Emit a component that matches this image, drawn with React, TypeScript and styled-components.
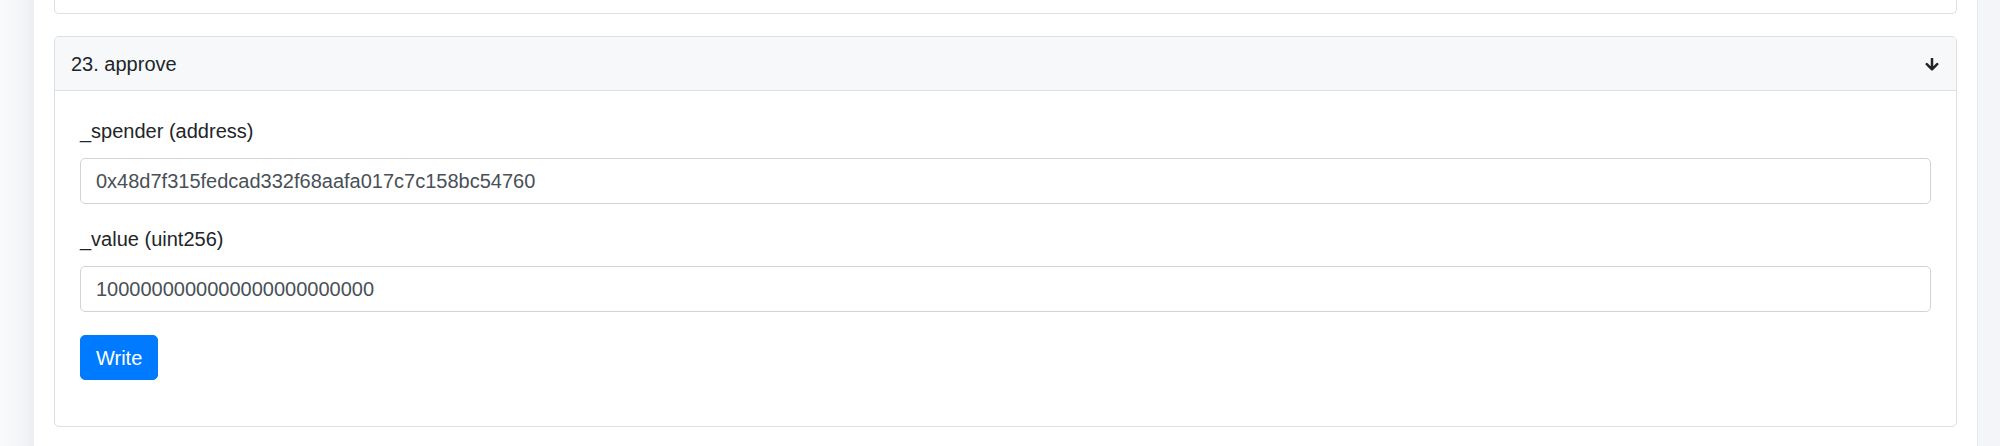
import React from "react";
import styled, { createGlobalStyle } from "styled-components";

const GlobalStyle = createGlobalStyle`
  html, body {
    margin: 0;
    padding: 0;
    height: 100%;
    overflow: hidden;
    background: #ffffff;
  }
  body {
    font-family: "Liberation Sans", Arial, Helvetica, sans-serif;
    color: #212529;
  }
  #root { height: 100%; }
  * { box-sizing: border-box; }
`;

const Page = styled.div`
  display: flex;
  height: 446px;
  width: 2000px;
`;

const LeftGutter = styled.div`
  width: 34px;
  flex: none;
  background: linear-gradient(to right, #fafbfc 0%, #f3f4f7 70%, #eceef3 100%);
`;

const RightGutter = styled.div`
  width: 23px;
  flex: none;
  background: #f4f5f8;
  border-left: 1px solid #e6e8ef;
`;

const Panel = styled.main`
  flex: 1;
  min-width: 0;
  background: #ffffff;
  padding: 0 20px 0 20px;
  display: flex;
  flex-direction: column;
`;

const PrevCardTail = styled.div`
  height: 14px;
  flex: none;
  border: 1px solid #dcdfe3;
  border-top: none;
  border-radius: 0 0 5px 5px;
  margin-bottom: 22px;
`;

const Card = styled.section`
  flex: none;
  border: 1px solid #dcdfe3;
  border-radius: 5px;
  overflow: hidden;
  background: #ffffff;
`;

const CardHeader = styled.header`
  height: 53px;
  box-sizing: content-box;
  background: #f7f8fa;
  border-bottom: 1px solid #dcdfe3;
  padding: 0 17px 0 16px;
  display: flex;
  align-items: center;
  justify-content: space-between;
  font-size: 20px;
  line-height: 24px;
  color: #212529;
`;

const Title = styled.span`
  padding-top: 1px;
`;

const ArrowIcon = styled.svg`
  width: 14px;
  height: 13px;
  display: block;
  margin-top: 2px;
`;

const CardBody = styled.div`
  padding: 25px 25px 25px 25px;
`;

const Field = styled.div`
  margin-bottom: 20px;
`;

const Label = styled.label`
  display: block;
  font-size: 20px;
  line-height: 30px;
  margin-bottom: 12px;
  color: #212529;
`;

const Input = styled.input`
  display: block;
  width: 100%;
  height: 46px;
  padding: 0 15px;
  font-family: "Liberation Sans", Arial, Helvetica, sans-serif;
  font-size: 20px;
  color: #495057;
  background: #ffffff;
  border: 1px solid #ced4da;
  border-radius: 5px;
  outline: none;
`;

const Actions = styled.div`
  padding-top: 3px;
  padding-bottom: 21px;
`;

const Button = styled.button`
  height: 45px;
  padding: 0 15px;
  font-family: "Liberation Sans", Arial, Helvetica, sans-serif;
  font-size: 20px;
  line-height: 30px;
  color: #ffffff;
  background: #007bff;
  border: 1px solid #007bff;
  border-radius: 5px;
  cursor: pointer;
`;

const fields = [
  { name: "_spender (address)", value: "0x48d7f315fedcad332f68aafa017c7c158bc54760" },
  { name: "_value (uint256)", value: "1000000000000000000000000" },
];

export default function App() {
  return (
    <>
      <GlobalStyle />
      <Page>
        <LeftGutter />
        <Panel>
          <PrevCardTail />
          <Card>
            <CardHeader>
              <Title>23. approve</Title>
              <ArrowIcon viewBox="0 0 14 13" fill="none">
                <path
                  d="M7 0.8 V11.2 M1.8 6.2 L7 11.4 L12.2 6.2"
                  stroke="#212529"
                  strokeWidth="2.5"
                  strokeLinecap="round"
                  strokeLinejoin="round"
                />
              </ArrowIcon>
            </CardHeader>
            <CardBody>
              {fields.map((f) => (
                <Field key={f.name}>
                  <Label>{f.name}</Label>
                  <Input defaultValue={f.value} />
                </Field>
              ))}
              <Actions>
                <Button>Write</Button>
              </Actions>
            </CardBody>
          </Card>
        </Panel>
        <RightGutter />
      </Page>
    </>
  );
}
